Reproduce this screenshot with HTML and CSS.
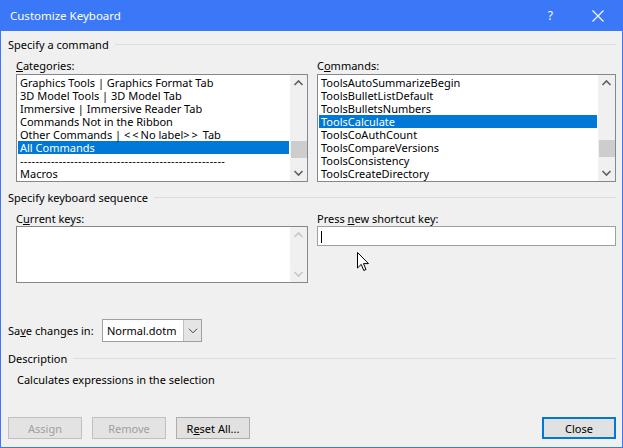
FILE: index.html
```html
<!DOCTYPE html>
<html>
<head>
<meta charset="utf-8">
<link rel="stylesheet" href="styles.css">
</head>
<body>
<div class="window">
  <div class="titlebar">
    <span class="title">Customize Keyboard</span>
    <span class="tb-help">?</span>
    <svg class="tb-close" width="12" height="12" viewBox="0 0 12 12"><path d="M0.5 0.5 L11.5 11.5 M11.5 0.5 L0.5 11.5" stroke="#fff" stroke-width="1.1" fill="none"/></svg>
  </div>
  <div class="content">
    <div class="group-head"><span>Specify a command</span><div class="rule"></div></div>
    <div class="cols">
      <div class="col">
        <div class="lbl"><u>C</u>ategories:</div>
        <div class="listbox">
          <div class="items">
            <div class="item">Graphics Tools | Graphics Format Tab</div>
            <div class="item">3D Model Tools | 3D Model Tab</div>
            <div class="item">Immersive | Immersive Reader Tab</div>
            <div class="item">Commands Not in the Ribbon</div>
            <div class="item">Other Commands | <span class="ang">&lt;&lt;</span>No label<span class="ang">&gt;&gt;</span> Tab</div>
            <div class="item sel">All Commands</div>
            <div class="item dashes">-----------------------------------------------------</div>
            <div class="item">Macros</div>
          </div>
          <div class="vscroll">
            <svg class="arr" width="17" height="17" viewBox="0 0 17 17"><path d="M4.5 10 L8.5 6 L12.5 10" stroke="#606060" stroke-width="1.6" fill="none"/></svg>
            <div class="track"><div class="thumb thumb-cat"></div></div>
            <svg class="arr" width="17" height="17" viewBox="0 0 17 17"><path d="M4.5 7 L8.5 11 L12.5 7" stroke="#606060" stroke-width="1.6" fill="none"/></svg>
          </div>
        </div>
      </div>
      <div class="col">
        <div class="lbl">C<u>o</u>mmands:</div>
        <div class="listbox">
          <div class="items">
            <div class="item">ToolsAutoSummarizeBegin</div>
            <div class="item">ToolsBulletListDefault</div>
            <div class="item">ToolsBulletsNumbers</div>
            <div class="item sel">ToolsCalculate</div>
            <div class="item">ToolsCoAuthCount</div>
            <div class="item">ToolsCompareVersions</div>
            <div class="item">ToolsConsistency</div>
            <div class="item">ToolsCreateDirectory</div>
          </div>
          <div class="vscroll">
            <svg class="arr" width="17" height="17" viewBox="0 0 17 17"><path d="M4.5 10 L8.5 6 L12.5 10" stroke="#606060" stroke-width="1.6" fill="none"/></svg>
            <div class="track"><div class="thumb thumb-cmd"></div></div>
            <svg class="arr" width="17" height="17" viewBox="0 0 17 17"><path d="M4.5 7 L8.5 11 L12.5 7" stroke="#606060" stroke-width="1.6" fill="none"/></svg>
          </div>
        </div>
      </div>
    </div>

    <div class="group-head gh2"><span>Specify keyboard sequence</span><div class="rule"></div></div>
    <div class="cols cols2">
      <div class="col">
        <div class="lbl">C<u>u</u>rrent keys:</div>
        <div class="listbox keysbox">
          <div class="items"></div>
          <div class="vscroll">
            <svg class="arr" width="17" height="17" viewBox="0 0 17 17"><path d="M4.5 10 L8.5 6 L12.5 10" stroke="#c6c6c6" stroke-width="1.6" fill="none"/></svg>
            <div class="track"></div>
            <svg class="arr" width="17" height="17" viewBox="0 0 17 17"><path d="M4.5 7 L8.5 11 L12.5 7" stroke="#c6c6c6" stroke-width="1.6" fill="none"/></svg>
          </div>
        </div>
      </div>
      <div class="col">
        <div class="lbl">Press <u>n</u>ew shortcut key:</div>
        <div class="textbox"><span class="caret"></span></div>
      </div>
    </div>

    <div class="save-row">
      <span class="save-lbl">Sa<u>v</u>e changes in:</span>
      <div class="combo">
        <span class="combo-val">Normal.dotm</span>
        <span class="combo-btn"><svg width="10" height="6" viewBox="0 0 10 6"><path d="M1 0.8 L5 4.8 L9 0.8" stroke="#404040" stroke-width="1" fill="none"/></svg></span>
      </div>
    </div>

    <div class="group-head gh3"><span>Description</span><div class="rule"></div></div>
    <div class="desc">Calculates expressions in the selection</div>

    <div class="buttons">
      <button class="btn disabled">Assign</button>
      <button class="btn disabled">Remove</button>
      <button class="btn">R<u>e</u>set All...</button>
      <span class="spacer"></span>
      <button class="btn default">Close</button>
    </div>
  </div>
  <svg class="cursor" width="13" height="20" viewBox="0 0 13 20"><path d="M0.5 0.5 L0.5 16 L4.2 12.4 L6.8 18.5 L9 17.5 L6.5 11.6 L11.5 11.6 Z" fill="#fff" stroke="#000" stroke-width="1"/></svg>
</div>
</body>
</html>
```
FILE: styles.css
```css
* { box-sizing: border-box; }
html, body { margin: 0; padding: 0; background: #f0f0f0; }
body {
  font-family: "Noto Sans", "Open Sans", sans-serif;
  font-size: 11px;
  color: #000;
}
.window {
  position: relative;
  width: 623px;
  height: 448px;
  background: #f0f0f0;
  border: 1px solid #3b78f8;
  border-top: 0;
  display: flex;
  flex-direction: column;
  overflow: hidden;
}
.titlebar {
  height: 31px;
  margin: 0 -1px;
  background: #3b78f8;
  color: #fff;
  display: flex;
  align-items: center;
  padding-left: 10px;
  flex: none;
}
.title { font-size: 11.5px; flex: 1; }
.tb-help { font-size: 12px; margin-right: 39px; }
.tb-close { margin-right: 19px; }
.content {
  flex: 1;
  display: flex;
  flex-direction: column;
  padding: 6px 6px 8px 7px;
}
.group-head {
  display: flex;
  align-items: center;
  height: 15px;
  line-height: 15px;
}
.group-head .rule {
  flex: 1;
  height: 1px;
  background: #dcdcdc;
  margin-left: 6px;
}
.cols {
  display: grid;
  grid-template-columns: 292px 299px;
  column-gap: 9px;
  margin-left: 8px;
  margin-top: 6px;
}
.lbl { height: 16px; line-height: 15px; }
u { text-decoration: underline; text-underline-offset: 1px; }
.ang { letter-spacing: 2px; }
.listbox {
  height: 108px;
  border: 1px solid #828790;
  background: #fff;
  display: flex;
}
.items { flex: 1; padding: 1px 1px 0 1px; overflow: hidden; }
.item {
  height: 13px;
  line-height: 13px;
  padding-left: 2px;
  white-space: nowrap;
}
.item.dashes { letter-spacing: 0.33px; }
.item.sel { background: #0078d7; color: #fff; }
.vscroll {
  width: 17px;
  background: #f0f0f0;
  display: flex;
  flex-direction: column;
  flex: none;
}
.arr { display: block; flex: none; }
.track { flex: 1; position: relative; }
.thumb {
  position: absolute;
  left: 1px;
  right: 0;
  background: #cdcdcd;
}
.thumb-cat { top: 49px; height: 17px; }
.thumb-cmd { top: 48px; height: 17px; }
.gh2 { margin-top: 8px; }
.cols2 { margin-top: 6px; }
.cols2 .lbl { height: 15px; }
.keysbox { height: 57px; }
.textbox {
  height: 20px;
  border: 1px solid #a0a0a0;
  background: #fff;
  position: relative;
  width: 299px;
}
.caret {
  position: absolute;
  left: 3px;
  top: 4px;
  width: 1px;
  height: 12px;
  background: #000;
}
.save-row {
  display: flex;
  align-items: center;
  margin-top: 36px;
  height: 23px;
}
.save-lbl { width: 94px; }
.combo {
  width: 100px;
  height: 23px;
  border: 1px solid #a0a0a0;
  background: #fff;
  display: flex;
}
.combo-val { flex: 1; padding-left: 4px; line-height: 21px; }
.combo-btn {
  width: 18px;
  background: #e5e5e5;
  border-left: 1px solid #c0c0c0;
  display: flex;
  align-items: center;
  justify-content: center;
}
.gh3 { margin-top: 9px; }
.desc { margin-top: 6px; margin-left: 9px; line-height: 15px; }
.buttons {
  margin-top: auto;
  display: flex;
  gap: 10px;
  height: 22px;
}
.spacer { flex: 1; }
.btn {
  width: 74px;
  height: 22px;
  font-family: inherit;
  font-size: 11px;
  background: #e1e1e1;
  border: 1px solid #adadad;
  color: #000;
  padding: 0;
  margin: 0;
}
.btn.disabled { color: #a0a0a0; border-color: #bfbfbf; background: #e3e3e3; }
.btn.default { border: 2px solid #0078d7; width: 74px; }
.cursor { position: absolute; left: 356px; top: 252px; }
```
